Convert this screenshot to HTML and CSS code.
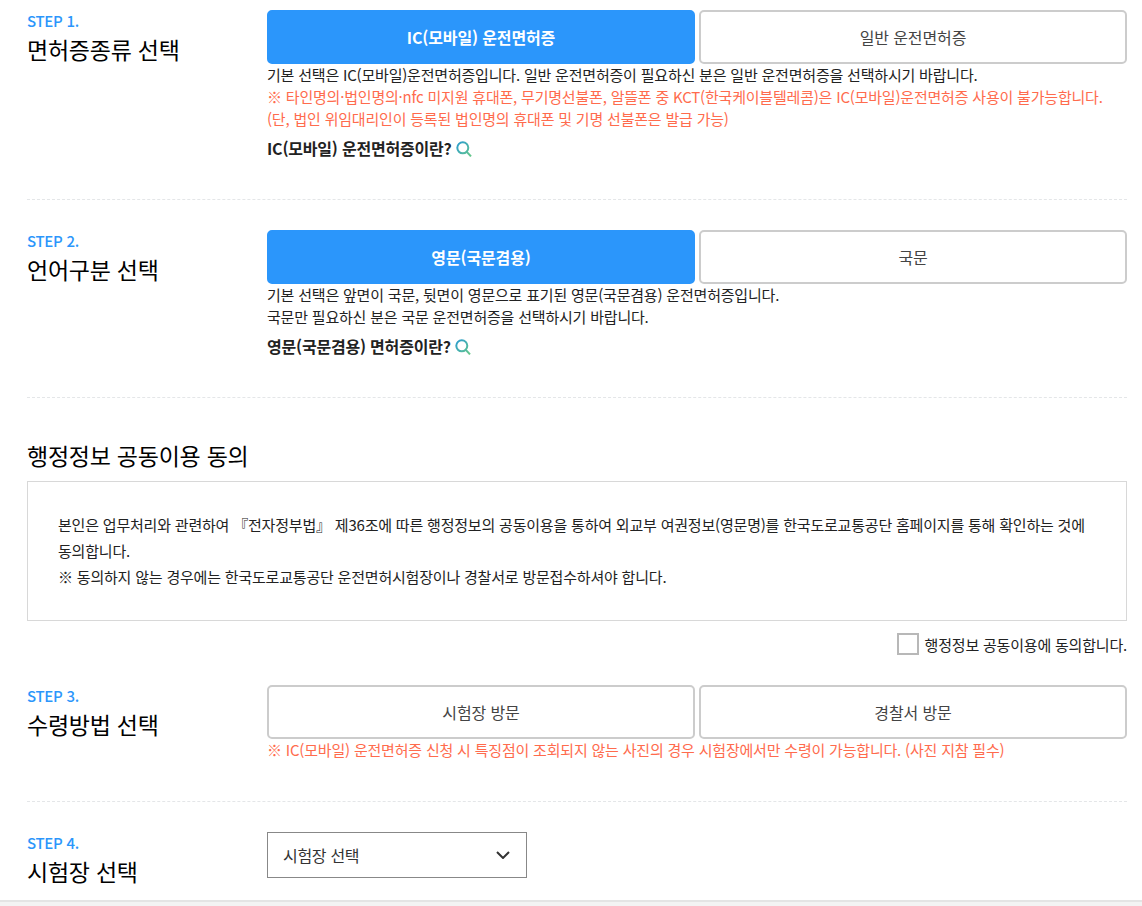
FILE: index.html
```html
<!DOCTYPE html>
<html lang="ko">
<head>
<meta charset="utf-8">
<title>운전면허증 신청</title>
<link rel="stylesheet" href="styles.css">
</head>
<body>
<svg class="defs" width="0" height="0" aria-hidden="true"><defs><linearGradient id="lensGrad" gradientUnits="userSpaceOnUse" x1="1" y1="1" x2="15" y2="15"><stop offset="0" stop-color="#2a9cd0"/><stop offset="1" stop-color="#66c78a"/></linearGradient></defs></svg>
<main class="page">
  <section class="row row-1">
    <div class="head"><p class="step">STEP 1.</p><h2 class="title">면허증종류 선택</h2></div>
    <div class="body">
      <div class="choices"><button class="choice on">IC(모바일) 운전면허증</button><button class="choice">일반 운전면허증</button></div>
      <p class="note">기본 선택은 IC(모바일)운전면허증입니다. 일반 운전면허증이 필요하신 분은 일반 운전면허증을 선택하시기 바랍니다.</p>
      <p class="note warn">※ 타인명의·법인명의·nfc 미지원 휴대폰, 무기명선불폰, 알뜰폰 중 KCT(한국케이블텔레콤)은 IC(모바일)운전면허증 사용이 불가능합니다.</p>
      <p class="note warn">(단, 법인 위임대리인이 등록된 법인명의 휴대폰 및 기명 선불폰은 발급 가능)</p>
      <p class="info">IC(모바일) 운전면허증이란?<svg class="lens" viewBox="0 0 16 16"><circle cx="6.8" cy="6.8" r="5.5"/><path d="M10.8 10.8L15 15.4"/></svg></p>
    </div>
  </section>
  <section class="row row-2">
    <div class="head"><p class="step">STEP 2.</p><h2 class="title">언어구분 선택</h2></div>
    <div class="body">
      <div class="choices"><button class="choice on">영문(국문겸용)</button><button class="choice">국문</button></div>
      <p class="note">기본 선택은 앞면이 국문, 뒷면이 영문으로 표기된 영문(국문겸용) 운전면허증입니다.</p>
      <p class="note">국문만 필요하신 분은 국문 운전면허증을 선택하시기 바랍니다.</p>
      <p class="info">영문(국문겸용) 면허증이란?<svg class="lens" viewBox="0 0 16 16"><circle cx="6.8" cy="6.8" r="5.5"/><path d="M10.8 10.8L15 15.4"/></svg></p>
    </div>
  </section>
  <section class="consent">
    <h2 class="title consent-title">행정정보 공동이용 동의</h2>
    <div class="consent-box">
      <p>본인은 업무처리와 관련하여 『전자정부법』 제36조에 따른 행정정보의 공동이용을 통하여 외교부 여권정보(영문명)를 한국도로교통공단 홈페이지를 통해 확인하는 것에 동의합니다.</p>
      <p>※ 동의하지 않는 경우에는 한국도로교통공단 운전면허시험장이나 경찰서로 방문접수하셔야 합니다.</p>
    </div>
    <label class="agree"><span class="check"></span>행정정보 공동이용에 동의합니다.</label>
  </section>
  <section class="row row-3">
    <div class="head"><p class="step">STEP 3.</p><h2 class="title">수령방법 선택</h2></div>
    <div class="body">
      <div class="choices"><button class="choice">시험장 방문</button><button class="choice">경찰서 방문</button></div>
      <p class="note warn">※ IC(모바일) 운전면허증 신청 시 특징점이 조회되지 않는 사진의 경우 시험장에서만 수령이 가능합니다. (사진 지참 필수)</p>
    </div>
  </section>
  <section class="row row-4">
    <div class="head"><p class="step">STEP 4.</p><h2 class="title">시험장 선택</h2></div>
    <div class="body">
      <div class="select"><span>시험장 선택</span><svg class="chev" viewBox="0 0 14 8"><path d="M1 1l6 6 6-6"/></svg></div>
    </div>
  </section>
</main>
<div class="band"></div>
</body>
</html>
```
FILE: styles.css
```css
* { box-sizing: border-box; }
html, body { margin: 0; padding: 0; background: #fff; }
body { height: 906px; overflow: hidden; font-family: "Noto Sans CJK KR", "Noto Sans", sans-serif; color: #222; font-size: 15px; }
p, h2 { margin: 0; }
.defs { display: block; height: 0; }
.page { padding: 0 15px 0 27px; height: 900px; overflow: hidden; }
.row { display: flex; border-bottom: 1px dashed #e4e6e8; }
.row-1 { padding-top: 10px; height: 200px; }
.row-2 { padding-top: 30px; height: 198px; }
.row-3 { padding-top: 30px; height: 147px; }
.row-4 { padding-top: 30px; border-bottom: 0; }
.head { width: 240px; flex: none; padding-top: 1px; }
.step { font-size: 15px; line-height: 20px; font-weight: 500; color: #2b96fb; letter-spacing: -0.3px; }
.title { margin-top: 3px; font-size: 23px; line-height: 30px; font-weight: 400; color: #000; letter-spacing: -0.25px; }
.body { flex: 1; min-width: 0; }
.choices { display: flex; gap: 4px; }
.choice { flex: 1; height: 54px; background: #fff; border: 2px solid #ccc; border-radius: 5px; font: 400 16px "Noto Sans CJK KR", sans-serif; letter-spacing: -0.13px; color: #444; padding: 0; }
.choice.on { background: #2b96fb; border-color: #2b96fb; color: #fff; font-weight: 700; }
.note { font-size: 15px; line-height: 22px; letter-spacing: -0.2px; color: #222; white-space: nowrap; }
.warn { color: #ff6b4d; }
.info { margin-top: 7px; font-size: 16px; line-height: 22px; font-weight: 700; color: #222; display: flex; align-items: center; gap: 4px; letter-spacing: -0.2px; }
.lens { width: 16px; height: 16px; fill: none; stroke: url(#lensGrad); stroke-width: 2; margin-top: 2px; }
.consent { padding-top: 42px; }
.consent-title { margin-top: 0; line-height: 30px; }
.consent-box { margin-top: 11px; height: 140px; border: 1px solid #d8d8d8; padding: 30px 30px 0; font-size: 15px; line-height: 26px; letter-spacing: -0.2px; color: #222; }
.agree { display: flex; justify-content: flex-end; align-items: center; gap: 6px; margin-top: 12px; height: 22px; letter-spacing: -0.2px; color: #222; }
.check { width: 22px; height: 22px; border: 2px solid #b8b8b8; background: #fff; }
.select { width: 260px; height: 46px; border: 1px solid #888; display: flex; align-items: center; justify-content: space-between; padding: 0 16px 0 15px; color: #333; font-size: 16px; letter-spacing: -0.3px; }
.chev { width: 14px; height: 8px; fill: none; stroke: #333; stroke-width: 2; }
.band { height: 6px; background: #f3f3f3; border-top: 2px solid #e4e4e4; }
```
